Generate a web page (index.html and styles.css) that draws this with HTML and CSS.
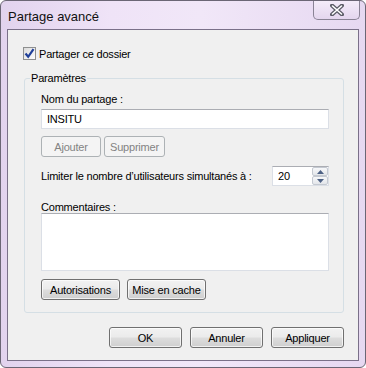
FILE: index.html
```html
<!DOCTYPE html>
<html lang="fr">
<head>
  <meta charset="UTF-8">
  <title>Partage avancé</title>
  <link rel="stylesheet" href="styles.css">
</head>
<body>
  <div class="window">
    <div class="titlebar">
      <span class="title">Partage avancé</span>
      <div class="close">
        <svg width="14" height="12" viewBox="0 0 14 12">
          <path d="M2 1.5 L12 10.5 M12 1.5 L2 10.5" stroke="#5b5b66" stroke-width="4" stroke-linecap="round"/>
          <path d="M2.5 2 L11.5 10 M11.5 2 L2.5 10" stroke="#fff" stroke-width="1.6" stroke-linecap="round"/>
        </svg>
      </div>
    </div>

    <div class="client">
      <label class="check-row">
        <span class="checkbox">
          <svg width="11" height="11" viewBox="0 0 11 11">
            <path d="M1.5 5.5 L4.2 8.8 L9.5 1.2" fill="none" stroke="#1f3f99" stroke-width="2.2"/>
          </svg>
        </span>
        Partager ce dossier
      </label>

      <fieldset class="group">
        <legend>Paramètres</legend>

        <div class="field-label">Nom du partage :</div>
        <div class="textbox">INSITU</div>

        <div class="btn-row">
          <button class="btn disabled btn-add">Ajouter</button>
          <button class="btn disabled btn-del">Supprimer</button>
        </div>

        <div class="limit-row">
          <span>Limiter le nombre d’utilisateurs simultanés à :</span>
          <div class="spinner">
            <span class="spin-value">20</span>
            <div class="spin-btns">
              <div class="spin-btn">
                <svg width="7" height="4" viewBox="0 0 7 4"><path d="M0 4 L3.5 0 L7 4 Z" fill="#4d6185"/></svg>
              </div>
              <div class="spin-btn">
                <svg width="7" height="4" viewBox="0 0 7 4"><path d="M0 0 L3.5 4 L7 0 Z" fill="#4d6185"/></svg>
              </div>
            </div>
          </div>
        </div>

        <div class="field-label comments-label">Commentaires :</div>
        <div class="textarea"></div>

        <div class="btn-row btn-row-bottom">
          <button class="btn btn-auth">Autorisations</button>
          <button class="btn btn-cache">Mise en cache</button>
        </div>
      </fieldset>

      <div class="footer">
        <button class="btn btn-dialog">OK</button>
        <button class="btn btn-dialog">Annuler</button>
        <button class="btn btn-dialog">Appliquer</button>
      </div>
    </div>
  </div>
</body>
</html>
```

FILE: styles.css
```css
* {
  box-sizing: border-box;
}
html, body {
  margin: 0;
  width: 366px;
  height: 368px;
  overflow: hidden;
  background: #fff;
}
body {
  font-family: "Liberation Sans", Arial, sans-serif;
  font-size: 11px;
  letter-spacing: -0.2px;
  color: #000;
}
.window {
  width: 366px;
  height: 368px;
  border: 1px solid #6b6675;
  border-radius: 6px;
  background: linear-gradient(90deg, #e2d3ee 0%, #efe3f7 30%, #f1e7f8 55%, #e6d8f1 100%);
  display: flex;
  flex-direction: column;
  padding: 0 6px 6px 6px;
}
.titlebar {
  height: 28px;
  display: flex;
  align-items: flex-start;
  justify-content: space-between;
}
.title {
  font-size: 13px;
  letter-spacing: 0;
  margin: 8px 0 0 1px;
  color: #111;
}
.close {
  width: 47px;
  height: 19px;
  margin-right: -1px;
  border: 1px solid #8a8395;
  border-top: none;
  border-radius: 0 0 5px 5px;
  background: linear-gradient(#f4ecf9, #e4d6ee);
  display: flex;
  align-items: center;
  justify-content: center;
}
.client {
  flex: 1;
  border: 1px solid #7a7089;
  background: #f0f0f0;
  padding: 17px 14px 0 16px;
  display: flex;
  flex-direction: column;
}
.check-row {
  display: flex;
  align-items: center;
  gap: 2px;
  height: 13px;
  margin-left: -1px;
}
.checkbox {
  width: 13px;
  height: 13px;
  border: 1px solid #8e8f8f;
  background: linear-gradient(135deg, #dcdcdc, #fdfdfd);
  display: flex;
  align-items: center;
  justify-content: center;
  margin-right: 1px;
}
.group {
  margin: 12px 0 0 0;
  border: 1px solid #d5dfe5;
  border-radius: 3px;
  padding: 0 14px 12px 16px;
  min-width: 0;
}
.group legend {
  margin-left: -11px;
  padding: 0 1px;
}
.field-label {
  margin-top: 8px;
  height: 14px;
  line-height: 14px;
}
.textbox {
  margin-top: 3px;
  height: 20px;
  border: 1px solid #dbdfe6;
  border-top-color: #abadb3;
  background: #fff;
  padding: 3px 5px;
  line-height: 13px;
}
.btn-row {
  display: flex;
  gap: 3px;
  margin-top: 7px;
}
.btn {
  font-family: inherit;
  font-size: 11px;
  letter-spacing: inherit;
  height: 21px;
  padding: 0;
  border: 1px solid #707070;
  border-radius: 3px;
  color: #000;
  background: linear-gradient(#f2f2f2 0%, #ebebeb 48%, #dddddd 52%, #cfcfcf 100%);
  box-shadow: inset 0 0 0 1px rgba(255, 255, 255, 0.7);
}
.btn.disabled {
  border-color: #adb2b5;
  background: #f4f4f4;
  color: #838383;
  box-shadow: none;
}
.btn-add {
  width: 60px;
}
.btn-del {
  width: 61px;
}
.limit-row {
  margin-top: 9px;
  display: flex;
  align-items: center;
  justify-content: space-between;
  height: 20px;
}
.spinner {
  width: 57px;
  height: 20px;
  border: 1px solid #dbdfe6;
  border-top-color: #abadb3;
  background: #fff;
  display: flex;
  align-items: center;
  justify-content: space-between;
  padding-left: 5px;
}
.spin-value {
  line-height: 13px;
}
.spin-btns {
  width: 16px;
  height: 18px;
  display: flex;
  flex-direction: column;
}
.spin-btn {
  flex: 1;
  border: 1px solid #c4c9d1;
  border-radius: 2px;
  background: linear-gradient(#f7f8fa, #e3e6ea);
  display: flex;
  align-items: center;
  justify-content: center;
}
.comments-label {
  margin-top: 14px;
  height: 13px;
}
.textarea {
  height: 58px;
  border: 1px solid #dbdfe6;
  border-top-color: #abadb3;
  background: #fff;
}
.btn-row-bottom {
  gap: 7px;
  margin-top: 8px;
}
.btn-auth {
  width: 79px;
}
.btn-cache {
  width: 79px;
}
.footer {
  display: flex;
  justify-content: flex-end;
  gap: 8px;
  margin-top: 14px;
}
.btn-dialog {
  width: 73px;
}
```
